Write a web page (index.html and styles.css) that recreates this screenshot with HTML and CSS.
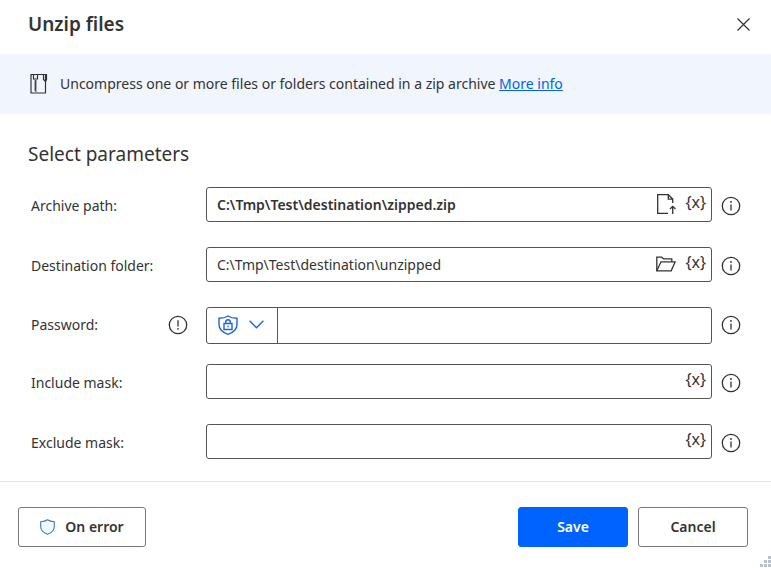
FILE: index.html
```html
<!DOCTYPE html>
<html lang="en">
<head>
    <meta charset="UTF-8">
    <title>Unzip files</title>
    <link rel="stylesheet" href="styles.css">
</head>
<body>
<!-- shared icons -->
<svg class="sprite" aria-hidden="true">
    <symbol id="icon-info" viewBox="0 0 20 20">
        <circle cx="10" cy="10" r="8.7" fill="none" stroke="currentColor" stroke-width="1.3"/>
        <path d="M10 8.5v6" stroke="currentColor" stroke-width="1.3"/>
        <circle cx="10" cy="6" r="0.9" fill="currentColor"/>
    </symbol>
</svg>

<div class="dialog">
    <header class="header">
        <h1>Unzip files</h1>
        <button type="button" class="close" aria-label="Close">
            <svg width="13" height="13" viewBox="0 0 13 13"><path d="M0.5 0.5l12 12M12.5 0.5l-12 12" stroke="currentColor" stroke-width="1.2"/></svg>
        </button>
    </header>

    <div class="banner">
        <svg width="18" height="22" viewBox="0 0 18 22" fill="none" stroke="currentColor" stroke-width="1.2">
            <path d="M1 1.5h14.500v18.500H1z"/>
            <path d="M13.500 1.5h3v5l-1 2-2-2z"/>
            <path d="M3.500 1.5v4.500h4v-4.500"/>
            <path d="M4.500 7l2 1-2 1 2 1-2 1 2 1-2 1 2 1-2 1 2 1-2 1 2 1-1 1" stroke-width="0.9"/>
        </svg>
        <p>Uncompress one or more files or folders contained in a zip archive <a href="#">More info</a></p>
    </div>

    <form id="unzipForm">
        <div class="params">
            <h2>Select parameters</h2>

            <div class="row">
                <label for="archive">Archive path:</label>
                <div class="field">
                    <input type="text" id="archive" class="strong" value="C:\Tmp\Test\destination\zipped.zip">
                    <button type="button" class="tool" aria-label="Select file">
                        <svg width="20" height="22" viewBox="0 0 20 22" fill="none" stroke="currentColor" stroke-width="1.3">
                            <path d="M12 20.3H1.7V1.7h10.6l4.4 4.4V10M12.3 1.7v4.4h4.4"/>
                            <path d="M16.7 21v-7.5M14 16l2.7-2.7 2.7 2.7"/>
                        </svg>
                    </button>
                    <button type="button" class="variable">{x}</button>
                </div>
                <button type="button" class="info" aria-label="Info"><svg width="20" height="20"><use href="#icon-info"/></svg></button>
            </div>

            <div class="row">
                <label for="destination">Destination folder:</label>
                <div class="field">
                    <input type="text" id="destination" value="C:\Tmp\Test\destination\unzipped">
                    <button type="button" class="tool" aria-label="Select folder">
                        <svg width="20" height="16" viewBox="0 0 20 16" fill="none" stroke="currentColor" stroke-width="1.3">
                            <path d="M0.8 14.8V1.2h4.8l2 1.6h8.2v3"/>
                            <path d="M0.8 14.8L5 5.8h14.2l-4 9z"/>
                        </svg>
                    </button>
                    <button type="button" class="variable">{x}</button>
                </div>
                <button type="button" class="info" aria-label="Info"><svg width="20" height="20"><use href="#icon-info"/></svg></button>
            </div>

            <div class="row password">
                <label for="password">Password:
                    <svg width="20" height="20" viewBox="0 0 20 20">
                        <circle cx="10" cy="10" r="8.7" fill="none" stroke="currentColor" stroke-width="1.3"/>
                        <path d="M10 5.3v6.2" stroke="currentColor" stroke-width="1.3"/>
                        <circle cx="10" cy="13.8" r="0.9" fill="currentColor"/>
                    </svg>
                </label>
                <div class="field">
                    <button type="button" class="mode" aria-label="Password input mode">
                        <svg width="20" height="20" viewBox="0 0 20 20" fill="none" stroke="currentColor" stroke-width="1.4">
                            <path d="M10 1C7.5 2.7 4.5 3.3 1 3.3V9.5C1 14.5 5 17.5 10 19.3C15 17.5 19 14.5 19 9.5V3.3C15.5 3.3 12.5 2.7 10 1z"/>
                            <path d="M6 8.500h8v6H6zM7.700 8.500V7a2.300 2.300 0 0 1 4.600 0v1.500M10 10.700v1.600"/>
                        </svg>
                        <svg width="15" height="9" viewBox="0 0 15 9" fill="none" stroke="currentColor" stroke-width="1.4"><path d="M0.6 0.8l6.900 6.900 6.900-6.900"/></svg>
                    </button>
                    <input type="password" id="password">
                </div>
                <button type="button" class="info" aria-label="Info"><svg width="20" height="20"><use href="#icon-info"/></svg></button>
            </div>

            <div class="row">
                <label for="include">Include mask:</label>
                <div class="field">
                    <input type="text" id="include">
                    <button type="button" class="variable">{x}</button>
                </div>
                <button type="button" class="info" aria-label="Info"><svg width="20" height="20"><use href="#icon-info"/></svg></button>
            </div>

            <div class="row">
                <label for="exclude">Exclude mask:</label>
                <div class="field">
                    <input type="text" id="exclude">
                    <button type="button" class="variable">{x}</button>
                </div>
                <button type="button" class="info" aria-label="Info"><svg width="20" height="20"><use href="#icon-info"/></svg></button>
            </div>
        </div>

        <footer class="footer">
            <button type="button" class="btn on-error">
                <svg width="15" height="16" viewBox="0 0 15 16" fill="#f0faff" stroke="#3a76d0" stroke-width="1.1"><path d="M7.5 0.8C5.5 2.2 3.3 2.7 0.7 2.7V7.5C0.7 11.3 3.5 13.8 7.5 15.2C11.5 13.8 14.3 11.3 14.3 7.5V2.7C11.7 2.7 9.5 2.2 7.5 0.8z"/></svg>
                On error
            </button>
            <button type="submit" class="btn primary">Save</button>
            <button type="button" class="btn">Cancel</button>
        </footer>
    </form>

    <!-- resize grip -->
    <svg class="grip" width="11" height="12" viewBox="0 0 11 12" fill="#b9bfcc">
        <path d="M8 0h3v3H8zM4 4h3v3H4zM8 4h3v3H8zM0 8h3v3H0zM4 8h3v3H4zM8 8h3v3H8z"/>
    </svg>
</div>
</body>
</html>
```

FILE: styles.css
```css
body {
    margin: 0;
    background-color: white;
    color: #333;
    font-family: "Noto Sans", "Open Sans", sans-serif;
    font-size: 14px;
    line-height: 20px;
}
h1, h2, p {
    margin: 0;
}
button, input {
    font: inherit;
    color: inherit;
}
button {
    padding: 0;
    border: none;
    background: none;
    cursor: pointer;
}
svg {
    display: block;
    flex: none;
}
.sprite {
    position: absolute;
    width: 0;
    height: 0;
}
.dialog {
    position: relative;
    min-height: 100vh;
}
.header {
    display: flex;
    justify-content: space-between;
    align-items: center;
    padding: 12px 21px 18px 28px;
}
h1 {
    font-size: 19px;
    font-weight: 600;
    line-height: 24px;
}
.banner {
    display: flex;
    align-items: center;
    gap: 12px;
    padding: 19px 30px;
    background-color: #f1f5fe;
}
a {
    color: #0063e8;
}
.params {
    padding: 27px 30px 22px 31px;
}
h2 {
    margin: 0 0 20px -3px;
    font-size: 19px;
    font-weight: 400;
    line-height: 26px;
}
.row {
    display: grid;
    grid-template-columns: 175px 1fr 20px;
    align-items: center;
    margin-bottom: 25px;
}
.row:last-child {
    margin-bottom: 0;
}
.row.password {
    margin-bottom: 20px;
}
label {
    display: flex;
    justify-content: space-between;
    align-items: center;
    padding: 2px 18px 0 0;
}
.password label,
.password .info {
    padding-top: 0;
    padding-bottom: 2px;
}
.field {
    display: flex;
    align-items: center;
    height: 33px;
    margin-right: 9px;
    border: 1px solid #555;
    border-radius: 3px;
}
.password .field {
    height: 35px;
}
.field input {
    flex: 1;
    min-width: 0;
    height: 100%;
    box-sizing: border-box;
    padding: 0 10px;
    border: none;
    outline: none;
    background: none;
}
.field .strong {
    font-weight: 600;
}
.tool {
    margin-right: 9px;
    padding-bottom: 2px;
}
.variable {
    padding: 0 5px 6px 0;
    font-size: 16px;
}
.mode {
    display: flex;
    align-items: center;
    gap: 11px;
    height: 100%;
    padding: 0 13px 2px 11px;
    border-right: 1px solid #555;
    color: #1f62e0;
}
.info {
    padding-top: 2px;
}
.footer {
    display: flex;
    gap: 10px;
    padding: 25px 23px 21px 18px;
    border-top: 1px solid #e6e6e6;
}
.btn {
    width: 110px;
    height: 40px;
    border: 1px solid #777;
    border-radius: 3px;
    font-weight: 600;
}
.primary {
    border-color: #0063ff;
    background-color: #0063ff;
    color: white;
}
.on-error {
    display: flex;
    justify-content: center;
    align-items: center;
    gap: 10px;
    width: 128px;
    margin-right: auto;
}
.grip {
    position: absolute;
    right: 0;
    bottom: 0;
}
```
